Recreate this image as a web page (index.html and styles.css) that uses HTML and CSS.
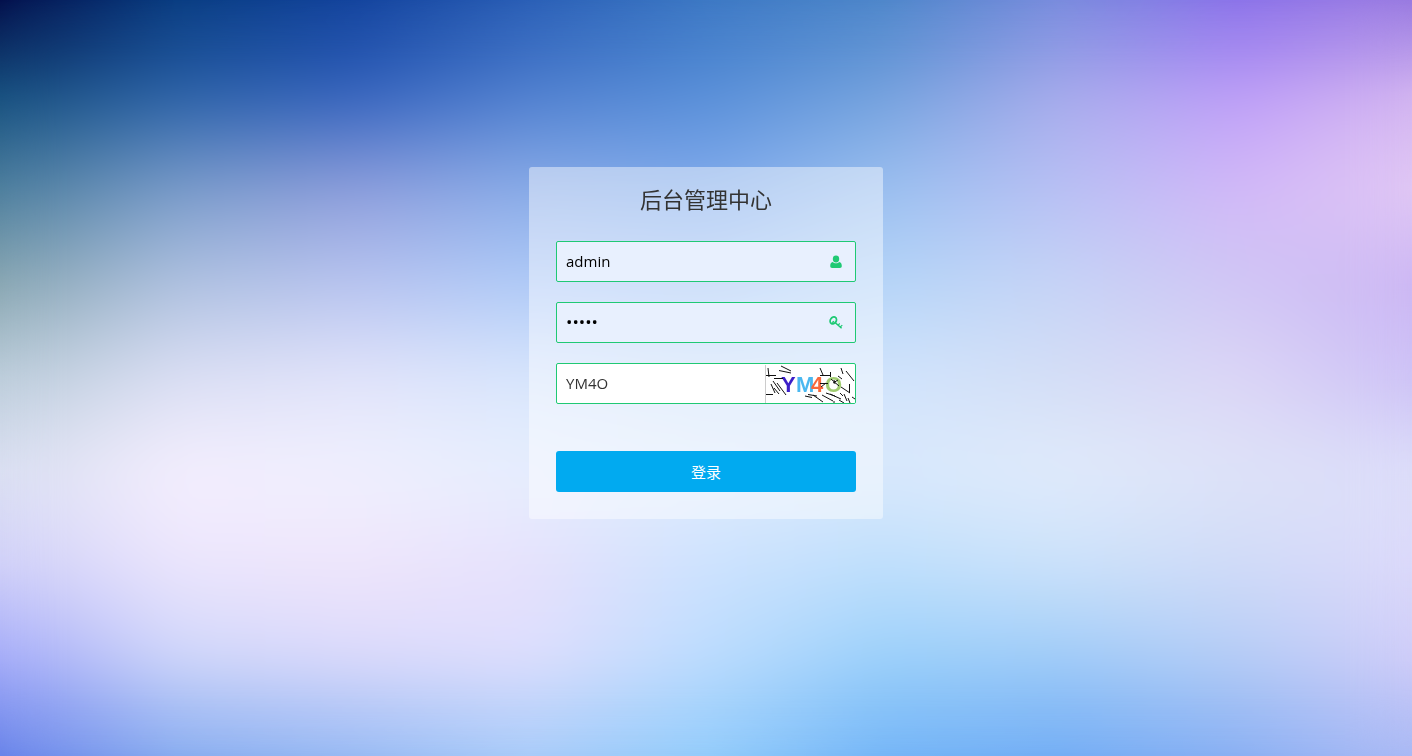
FILE: index.html
```html
<!DOCTYPE html>
<html lang="zh-CN">
<head>
<meta charset="utf-8">
<meta name="viewport" content="width=device-width, initial-scale=1">
<title>后台管理中心</title>
<link rel="stylesheet" href="styles.css">
</head>
<body>
<div class="backdrop" aria-hidden="true">
  <div class="band band-1"></div>
  <div class="band band-2"></div>
  <div class="band band-3"></div>
  <div class="band band-4"></div>
  <div class="band band-5"></div>
  <div class="band band-6"></div>
  <div class="band band-7"></div>
  <div class="band band-8"></div>
  <div class="band band-9"></div>
  <div class="band band-soften"></div>
</div>
<main class="page">
  <form class="login">
    <h1 class="login-title">后台管理中心</h1>
    <div class="field field-filled">
      <input class="field-input" type="text" value="admin" aria-label="用户名">
      <svg class="field-icon" viewBox="0 0 14 14" aria-hidden="true">
        <ellipse cx="7" cy="4" rx="3.2" ry="3.4"/>
        <path d="M3.7 6.9C2 7.2 1.2 8.8 1.2 11.1C1.2 12.4 1.9 13 3.1 13H10.9C12.1 13 12.8 12.4 12.8 11.1C12.8 8.8 12 7.2 10.3 6.9C9.4 7.8 8.3 8.3 7 8.3S4.6 7.8 3.7 6.9Z"/>
      </svg>
    </div>
    <div class="field field-filled">
      <input class="field-input field-input-password" type="password" value="admin" aria-label="密码">
      <svg class="field-icon field-icon-line" viewBox="0 0 14 14" aria-hidden="true">
        <ellipse cx="4.3" cy="4.4" rx="2.9" ry="3.7" transform="rotate(32 4.3 4.4)" stroke-width="1.8"/>
        <path d="M3.2 6.6L5 5.4M6.3 6.7L12.6 12.3" stroke-width="1.5"/>
        <path d="M9 9.1L10.8 7.5M11.2 11L13.3 9.1" stroke-width="1.2"/>
      </svg>
    </div>
    <div class="field">
      <input class="field-input" type="text" value="YM4O" aria-label="验证码">
      <svg class="captcha" viewBox="1 0 89 38" role="img" aria-label="验证码图片">
        <g class="captcha-letters">
          <text class="letter-y" x="16" y="27">Y</text>
          <text class="letter-m" x="31" y="27">M</text>
          <text class="letter-4" x="46" y="27">4</text>
          <text class="letter-o" x="60" y="27">O</text>
        </g>
        <path class="captcha-lines" d="M3 3L4 12M1 10.500H11M9 13.500H18M16 1L26 6M14 5.500L26 8M0 29.500H8M6 19L10 28M8 16L15 26M12 18L21 30M9 23L14 29M55 3L58 10M55 10.500H66M65.500 7V12M76 3L78 9M81 6L89 16M73 11L77 14M84.500 19V28M76 22L85 28M55 18.500H63M56 22L61 18M66 14L74 21M68 18L73 15M69 15L70 19M40 31L47 32.500M43 29.500L52 31M48 30L58 37M57 30L68 36M61 28L70 31M65 29L76 34M69 36V38M75 28L78 31M74 35L79 38M79 29L82 36M83 33L85 38M87 32L90 34"/>
      </svg>
    </div>
    <button class="login-submit" type="button">登录</button>
  </form>
</main>
</body>
</html>
```
FILE: styles.css
```css
* {
  box-sizing: border-box;
}

body {
  margin: 0;
  min-height: 100vh;
  font-family: "Open Sans", "Noto Sans CJK SC", sans-serif;
  font-size: 15px;
  color: #333;
}

/* Colour mesh: each band fades in over the previous one */
.backdrop {
  position: fixed;
  inset: 0;
  z-index: -1;
  display: grid;
}

.band {
  grid-area: 1 / 1;
}

.band-1 {
  background: linear-gradient(to right, #030c48, #063a7e, #10409a, #275cb4, #3a76c2, #4a84c8, #7589dc, #866ee8, #9778e0);
}

.band-2 {
  background: linear-gradient(to right, #15507e, #2b62a8, #3463be, #5080d0, #588fd9, #74a2de, #a8acec, #be9ef8, #d4b6f0);
  mask-image: linear-gradient(transparent 0%, #000 12.5%);
}

.band-3 {
  background: linear-gradient(to right, #4c7e9c, #7a9cca, #8f9edc, #8aace8, #80aaec, #9bc0f0, #b8c0f4, #d2b8f8, #e2c9f4);
  mask-image: linear-gradient(transparent 12.5%, #000 25%);
}

.band-4 {
  background: linear-gradient(to right, #88a6b0, #b0c2e0, #b8c4f0, #b0cbf8, #a8c8f6, #b6d6f8, #c6d4f6, #d0c6f4, #ccb6f4);
  mask-image: linear-gradient(transparent 25%, #000 37.5%);
}

.band-5 {
  background: linear-gradient(to right, #bccdda, #dbdff4, #e2e4fa, #d9e6fc, #cfe2fb, #d2e5fc, #d4def6, #dcd6f6, #cdc2f6);
  mask-image: linear-gradient(transparent 37.5%, #000 50%);
}

.band-6 {
  background: linear-gradient(to right, #dbe0f2, #f5effe, #f0f0fe, #e7effe, #e0ecfd, #d9e9fc, #e1ebfb, #dee3f8, #dddef9);
  mask-image: linear-gradient(transparent 50%, #000 62.5%);
}

.band-7 {
  background: linear-gradient(to right, #cfcff8, #ebe5fc, #efe5fb, #e6e1fc, #cde2fe, #bedffc, #cbe2fa, #d0dbf8, #dcd9fa);
  mask-image: linear-gradient(transparent 62.5%, #000 75%);
}

.band-8 {
  background: linear-gradient(to right, #a2a9f8, #cfd6fa, #dad9fb, #dedefd, #bcdcfe, #9ad0fa, #9ecbf8, #b4ccf6, #d0ccf8);
  mask-image: linear-gradient(transparent 75%, #000 87.5%);
}

.band-9 {
  background: linear-gradient(to right, #6480e8, #80a8ee, #90b6f2, #a2c9f8, #8ecafa, #70b2f6, #6eaaf4, #84acf2, #a8b8f4);
  mask-image: linear-gradient(transparent 87.5%, #000 100%);
}

.band-soften {
  backdrop-filter: blur(28px);
}

.page {
  display: flex;
  justify-content: center;
  padding: 167px 16px 40px;
}

.login {
  display: flex;
  flex-direction: column;
  gap: 20px;
  width: 100%;
  max-width: 354px;
  padding: 12px 27px 27px;
  border-radius: 3px;
  background: rgba(255, 255, 255, 0.45);
}

.login-title {
  margin: 0;
  padding-bottom: 2px;
  font-size: 22px;
  font-weight: 400;
  line-height: 40px;
  text-align: center;
}

.field {
  display: flex;
  align-items: center;
  height: 41px;
  border: 1px solid #1fc974;
  border-radius: 2px;
  background: #fff;
  overflow: hidden;
}

.field-filled {
  background: #e8f0fe;
}

.field-input {
  flex: 1;
  min-width: 0;
  height: 100%;
  padding: 0 9px 2px;
  border: 0;
  outline: 0;
  background: transparent;
  font: inherit;
  color: #333;
}

.field-input-password {
  font-size: 17px;
}

.field-filled .field-input {
  color: #000;
}

.field-icon {
  width: 14px;
  height: 14px;
  margin-right: 12px;
  fill: #1fc974;
}

.field-icon-line {
  fill: none;
  stroke: #1fc974;
}

.captcha {
  flex: none;
  width: 90px;
  height: 38px;
  border-left: 1px solid #ccc;
  background: #fff;
}

.captcha-letters {
  font: bold 22px "Liberation Sans", sans-serif;
}

.letter-y {
  fill: #3c1fc8;
}

.letter-m {
  fill: #4ab8f0;
}

.letter-4 {
  fill: #f8683a;
}

.letter-o {
  fill: #a0cc70;
}

.captcha-lines {
  fill: none;
  stroke: #111;
  stroke-width: 1;
}

.login-submit {
  height: 41px;
  margin-top: 27px;
  border: 0;
  border-radius: 3px;
  background: #01aaf0;
  color: #fff;
  font: inherit;
  cursor: pointer;
}
```
